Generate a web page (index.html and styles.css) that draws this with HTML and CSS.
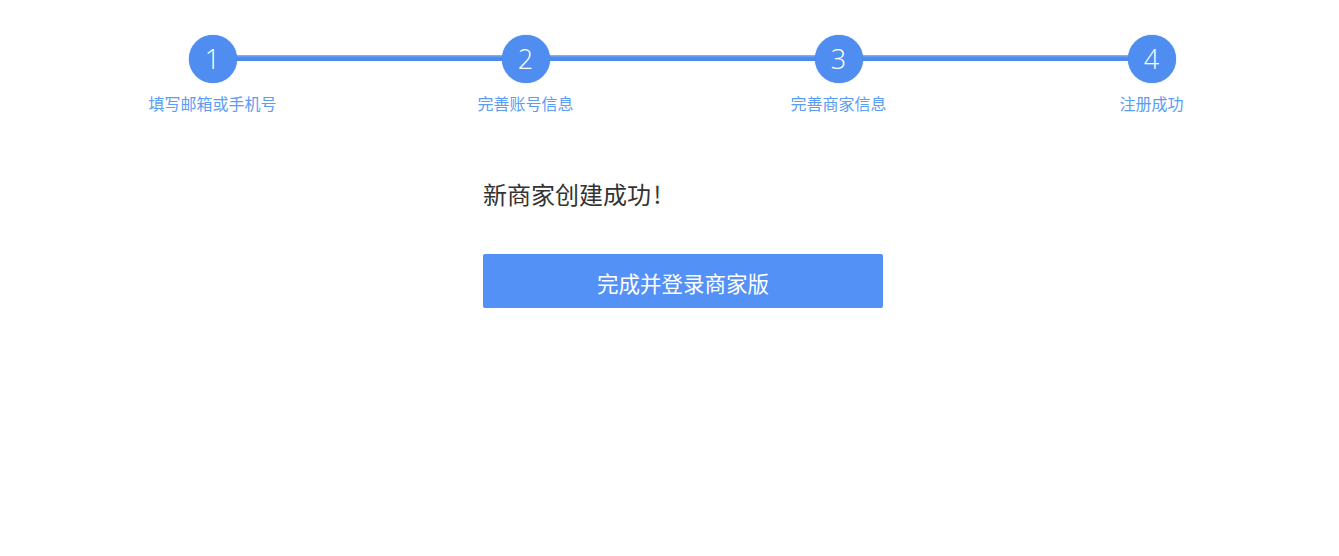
FILE: index.html
```html
<!DOCTYPE html>
<html>
<head>
  <title>注册成功</title>
  <meta charset="UTF-8"/>
  <link rel="stylesheet" href="styles.css">
</head>
<body>

  <div class="page">
    <div class="steps">
      <div class="step">
        <div class="step-num">1</div>
        <div class="step-label">填写邮箱或手机号</div>
      </div>
      <div class="step">
        <div class="step-num">2</div>
        <div class="step-label">完善账号信息</div>
      </div>
      <div class="step">
        <div class="step-num">3</div>
        <div class="step-label">完善商家信息</div>
      </div>
      <div class="step">
        <div class="step-num">4</div>
        <div class="step-label">注册成功</div>
      </div>
    </div>

    <div class="result">
      <div class="result-title">新商家创建成功 !</div>
      <button class="finish-button">完成并登录商家版</button>
    </div>
  </div>

</body>
</html>
```

FILE: styles.css
```css
body {
  margin: 0;
  background-color: white;
  font-family: "Noto Sans CJK SC", "Noto Sans", sans-serif;
}

.page {
  width: 1252px;
  margin-left: 56px;
  padding-top: 35px;
}

.steps {
  display: grid;
  grid-template-columns: repeat(4, 1fr);
}

.step {
  position: relative;
  display: flex;
  flex-direction: column;
  align-items: center;
}

/* connecting line, drawn in halves left and right of each circle */
.step::before,
.step::after {
  content: "";
  position: absolute;
  top: 20px;
  height: 6px;
  width: 50%;
  background: linear-gradient(#8fb6f2, #4f8ef0 40%, #4a88ec);
}

.step::before {
  left: 0;
}

.step::after {
  right: 0;
}

.step:first-child::before,
.step:last-child::after {
  display: none;
}

.step-num {
  position: relative;
  z-index: 1;
  width: 48px;
  height: 48px;
  border-radius: 50%;
  background-color: #4f8ef0;
  box-shadow: 0 0 1px #3a78dc;
  color: white;
  font-family: "Open Sans", "Noto Sans", sans-serif;
  font-weight: 300;
  font-size: 27px;
  line-height: 48px;
  text-align: center;
}

.step-label {
  margin-top: 10px;
  font-size: 16px;
  line-height: 20px;
  color: #5b9cf4;
}

.result {
  width: 400px;
  margin: 0 auto;
  padding: 65px 0 0 2px;
}

.result-title {
  font-size: 24px;
  line-height: 32px;
  color: #333;
  word-spacing: -3px;
}

.finish-button {
  display: block;
  width: 400px;
  height: 54px;
  margin-top: 44px;
  border: none;
  border-radius: 2px;
  background-color: #5391f6;
  color: white;
  font-family: "Noto Sans CJK SC", "Noto Sans", sans-serif;
  font-size: 21.5px;
  padding-top: 3px;
  cursor: pointer;
}
```
